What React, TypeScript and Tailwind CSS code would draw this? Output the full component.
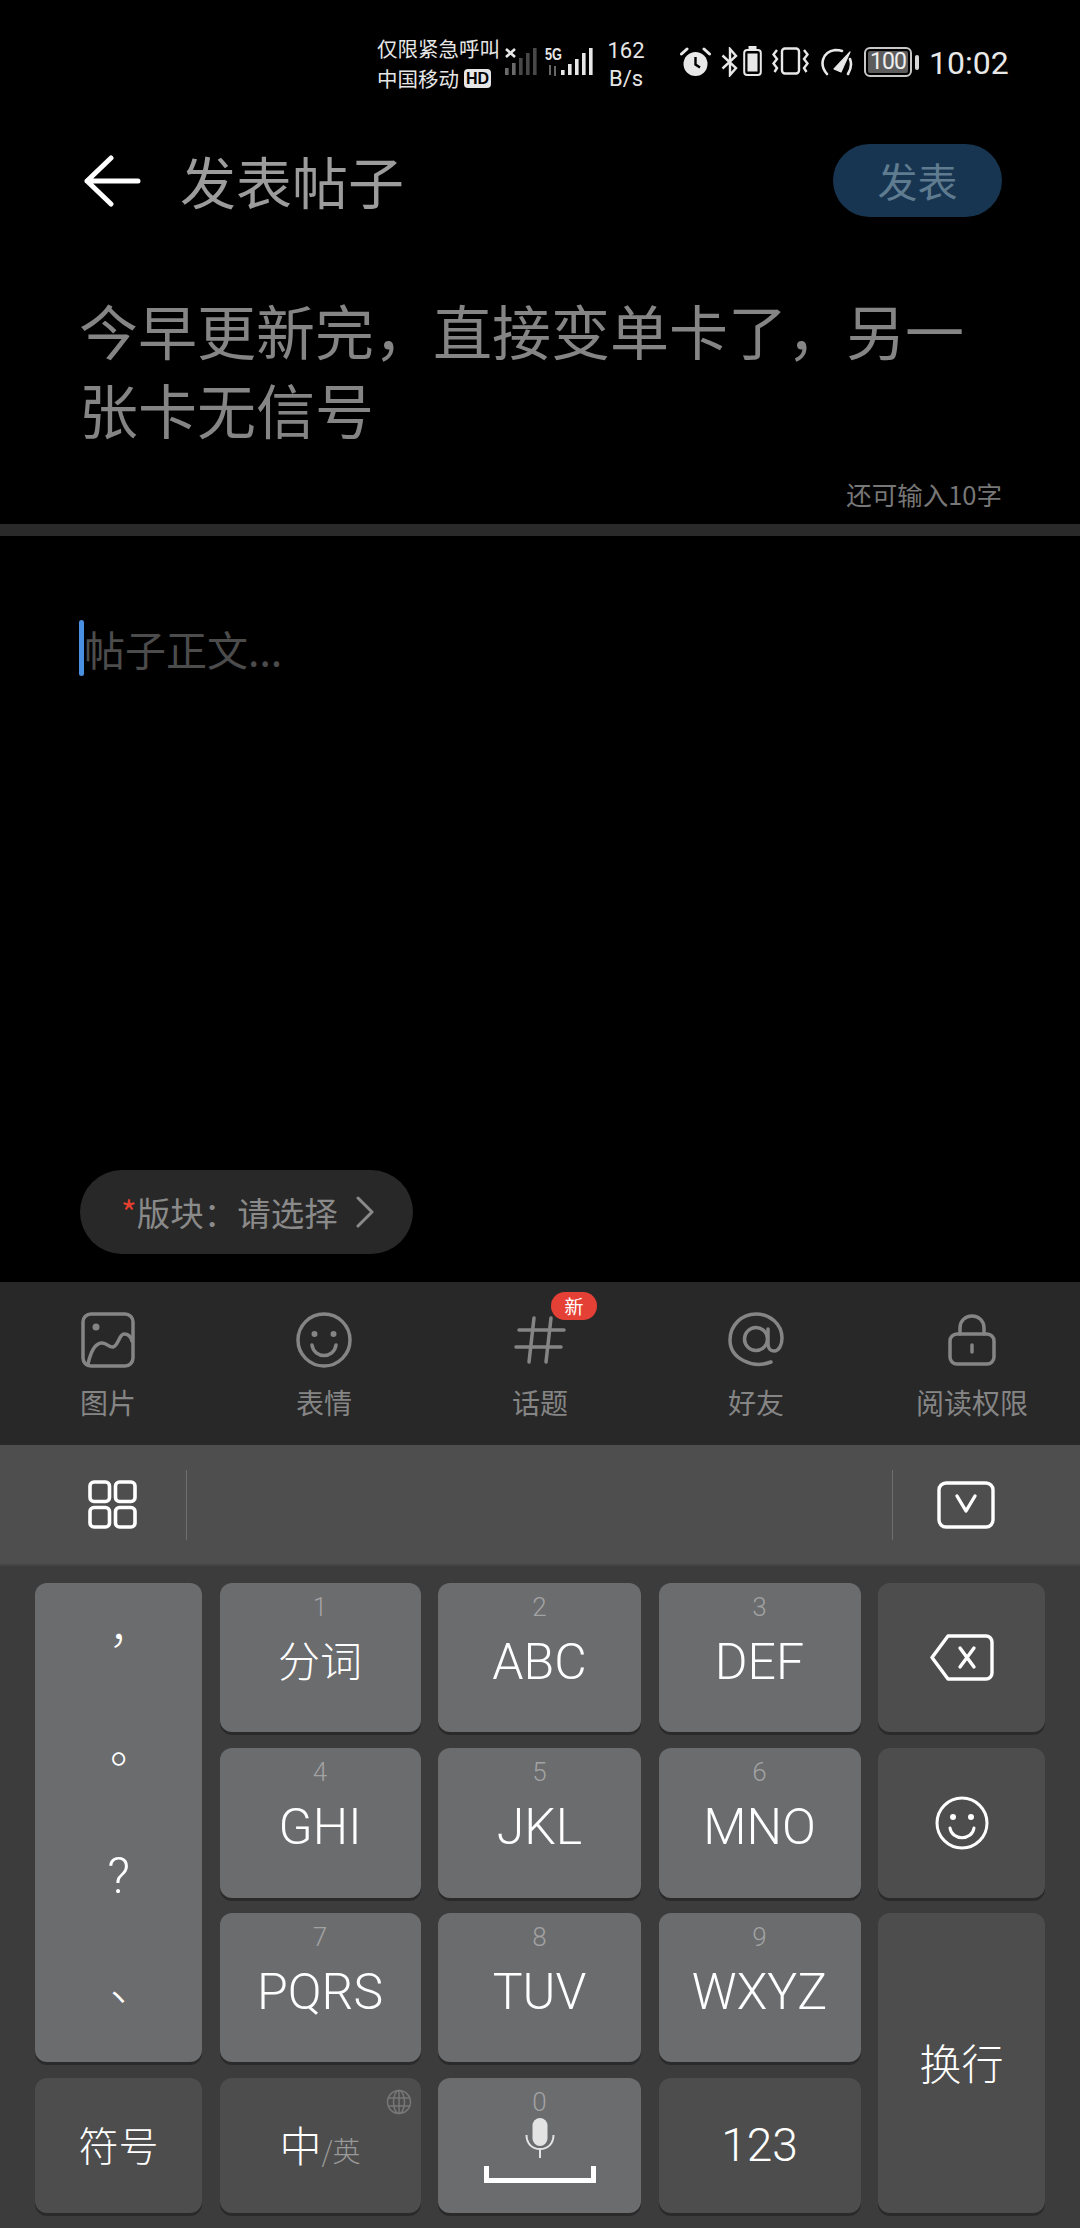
import React from "react";

const CJK = "font-['Noto_Sans_CJK_SC','Noto_Sans',sans-serif]";
const LAT = "font-['Liberation_Sans',sans-serif]";

function Signal({ dim, className }: { dim?: boolean; className?: string }) {
  const bars = dim
    ? [[0, 20, 7], [7, 15, 12], [14, 10, 17], [21, 5, 22], [28, 0, 27]]
    : [[0, 22, 5], [7, 16, 11], [14, 11, 16], [21, 5, 22], [28, 0, 27]];
  return (
    <svg width="32" height="27" viewBox="0 0 32 27" className={className}>
      {bars.map(([x, y, h], i) => (
        <rect key={i} x={x} y={y} width="3.6" height={h} fill={dim ? (i < 2 ? "#6a6a6a" : "#484848") : "#e8e8e8"} />
      ))}
    </svg>
  );
}

function StatusBar() {
  return (
    <div className="h-[144px] pt-[33px] pl-[377px] flex items-start text-[#e6e6e6]">
      <div className={`flex flex-col w-[124px] text-[20.500px] leading-[30px] ${CJK}`}>
        <div className="whitespace-nowrap">仅限紧急呼叫</div>
        <div className="flex items-center whitespace-nowrap">
          中国移动
          <span className={`ml-[5px] h-[19px] w-[27px] rounded-[4px] bg-[#e6e6e6] text-black text-[16px] leading-[19px] font-bold text-center ${LAT}`}>HD</span>
        </div>
      </div>
      <div className="relative w-[31px] h-[40px] ml-[4px] mt-[15px]">
        <Signal dim className="absolute left-0 top-0" />
        <svg width="12" height="10" viewBox="0 0 12 10" className="absolute left-0 top-0">
          <path d="M1 1l9 8M10 1l-9 8" stroke="#e8e8e8" strokeWidth="2.600" />
        </svg>
      </div>
      <div className="relative w-[50px] h-[40px] ml-[9px] mt-[15px]">
        <span className={`absolute left-0 -top-[2px] text-[17px] leading-[18px] font-bold scale-x-75 origin-left ${LAT}`}>5G</span>
        <svg width="12" height="11" viewBox="0 0 12 11" className="absolute left-[2px] top-[17px]">
          <path d="M3 0v10M8 1v10" stroke="#666" strokeWidth="2" />
        </svg>
        <Signal className="absolute left-[16px] top-0" />
      </div>
      <div className="w-[40px] ml-[11px] mt-[4px] text-[22px] leading-[28px] text-center font-['Roboto',sans-serif]">
        <div>162</div>
        <div>B/s</div>
      </div>
      <svg width="31" height="30" viewBox="0 0 31 30" className="ml-[34px] mt-[14px]" fill="none">
        <circle cx="15.500" cy="17" r="12" fill="#e8e8e8" />
        <path d="M15.500 10v7.500l4.500 3" stroke="#000" strokeWidth="2.400" />
        <path d="M1.500 7L7 2M29.500 7L24 2" stroke="#e8e8e8" strokeWidth="3" strokeLinecap="round" />
      </svg>
      <svg width="18" height="30" viewBox="0 0 18 30" className="ml-[10px] mt-[14px]" fill="none">
        <path d="M1.500 8.500L15 21l-6 7V2l6 7L1.500 21.500" stroke="#e8e8e8" strokeWidth="2.400" />
      </svg>
      <svg width="19" height="30" viewBox="0 0 19 30" className="ml-[4px] mt-[13px]" fill="none">
        <rect x="5.500" y="0" width="8" height="3" fill="#e8e8e8" />
        <rect x="1.200" y="4" width="16.600" height="25" rx="3" stroke="#e8e8e8" strokeWidth="2" />
        <rect x="4.500" y="7.500" width="10" height="18" fill="#e8e8e8" />
      </svg>
      <svg width="37" height="28" viewBox="0 0 37 28" className="ml-[10px] mt-[14px]" fill="none" stroke="#e8e8e8" strokeWidth="2.400">
        <rect x="10" y="1.500" width="17" height="25" rx="3" />
        <path d="M5 3L1.500 7.500 5 12l-3.500 4.500L5 21l-2.500 4M32 3l3.500 4.500L32 12l3.500 4.500L32 21l2.500 4" />
      </svg>
      <svg width="33" height="28" viewBox="0 0 33 28" className="ml-[11px] mt-[15px]" fill="none" stroke="#e8e8e8" strokeWidth="2.600" strokeLinecap="round">
        <path d="M7 26C-1 17 2 4 15 2c3 0 5 0 7 1" />
        <path d="M30 11c2 5 1 10-2 15" />
        <path d="M14 21L30 4l-9 20z" fill="#e8e8e8" strokeWidth="1.200" strokeLinejoin="round" />
      </svg>
      <div className="ml-[11px] mt-[14px] flex items-center">
        <div className="w-[48px] h-[30px] rounded-[6px] border-2 border-[#c8c8c8] p-[2px]">
          <div className="h-full bg-[#5c5c5c] rounded-[2px] text-[23px] leading-[22px] text-center text-[#efefef] font-['Roboto',sans-serif] tracking-[-1px]">100</div>
        </div>
        <div className="ml-[3px] w-[4px] h-[15px] bg-[#d8d8d8] rounded-[2px]" />
      </div>
      <div className="ml-[10px] mt-[11px] text-[32px] leading-[38px] text-[#e8e8e8] font-['Roboto',sans-serif]">10:02</div>
    </div>
  );
}

function ToolItem({ label, children, badge }: { label: string; children: React.ReactNode; badge?: boolean }) {
  return (
    <div className="relative flex-1 flex flex-col items-center">
      <div className="h-[60px] w-[60px] mt-[28px] flex items-center justify-center">{children}</div>
      <div className={`mt-[12px] text-[28px] leading-[40px] text-[#858585] whitespace-nowrap ${CJK}`}>{label}</div>
      {badge && (
        <div className={`absolute left-[119px] top-[10px] w-[46px] h-[28px] rounded-[14px] bg-[#e54035] text-white text-[19px] leading-[28px] text-center ${CJK}`}>新</div>
      )}
    </div>
  );
}

function Key({ children, dark, className = "" }: { children?: React.ReactNode; dark?: boolean; className?: string }) {
  return (
    <div className={`relative rounded-[12px] shadow-[0_3px_0_#2a2a2a] ${dark ? "bg-[#4d4d4d]" : "bg-[#6b6c6e]"} ${className}`}>
      {children}
    </div>
  );
}

function NumKey({ n, label, cjk }: { n: string; label: string; cjk?: boolean }) {
  return (
    <Key className="flex flex-col items-center">
      <div className="mt-[11px] h-[26px] text-[26px] leading-[26px] text-[#a2a2a3] font-['Roboto',sans-serif] font-light">{n}</div>
      <div className={`h-[50px] leading-[50px] text-white ${cjk ? `mt-[14px] text-[42px] font-light ${CJK}` : "mt-[17px] text-[50px] font-light font-['Roboto',sans-serif]"}`}>{label}</div>
    </Key>
  );
}

export default function App() {
  return (
    <div className="w-[1080px] h-[2228px] bg-black flex flex-col overflow-hidden">
      <StatusBar />

      <div className="h-[73px] pl-[84px] pr-[78px] flex items-center">
        <svg width="57" height="52" viewBox="0 0 57 52" fill="none" stroke="#fff" strokeWidth="5" strokeLinecap="round" strokeLinejoin="round">
          <path d="M27 3L3 26l24 23M3 26h51" />
        </svg>
        <div className={`ml-[39px] -mt-[2px] text-[56px] leading-[73px] text-[#9c9c9c] ${CJK}`}>发表帖子</div>
        <div className={`ml-auto w-[169px] h-[73px] rounded-[37px] bg-[#173550] text-[40px] leading-[73px] text-center text-[#5f7b90] ${CJK}`}>发表</div>
      </div>

      <div className={`pt-[73px] px-[79px] text-[59px] leading-[79px] text-[#858585] h-[231px] ${CJK}`}>
        今早更新完，直接变单卡了，另一
        <br />
        张卡无信号
      </div>
      <div className={`mt-[31px] mb-[3px] pr-[78px] text-right text-[25.500px] leading-[30px] text-[#777777] ${CJK}`}>还可输入10字</div>
      <div className="mt-[12px] h-[12px] bg-[#2a2a2a]" />

      <div className="flex-1 flex flex-col pl-[79px] pt-[84px]">
        <div className="flex items-center h-[56px]">
          <div className="w-[5px] h-[56px] rounded-[3px] bg-[#4a90e2]" />
          <div className={`-mt-[1px] text-[41px] leading-[56px] text-[#4c4c4c] ${CJK}`}>帖子正文...</div>
        </div>
        <div className={`mt-auto mb-[28px] ml-[1px] w-[333px] h-[84px] rounded-[42px] bg-[#282828] flex items-center pl-[41px] text-[33.500px] text-[#8a8a8a] ${CJK}`}>
          <span className="text-[#e5402f]">*</span>
          <span className="whitespace-nowrap">版块：请选择</span>
          <svg width="20" height="32" viewBox="0 0 20 32" fill="none" stroke="#8a8a8a" strokeWidth="3" strokeLinecap="round" strokeLinejoin="round" className="ml-[17px]">
            <path d="M3 2l14 14L3 30" />
          </svg>
        </div>
      </div>

      <div className="h-[163px] shrink-0 bg-[#282828] flex">
        <ToolItem label="图片">
          <svg width="54" height="56" viewBox="0 0 54 56" fill="none" stroke="#858585" strokeWidth="3.500" strokeLinejoin="round" strokeLinecap="round">
            <rect x="2" y="2" width="50" height="52" rx="8" />
            <circle cx="15" cy="15" r="3.500" fill="#858585" stroke="none" />
            <path d="M7 52c2-9 6-20 13-21 6-1 8 5 12 4 6-2 6-13 11-13 4 0 7 3 8 7" />
          </svg>
        </ToolItem>
        <ToolItem label="表情">
          <svg width="56" height="56" viewBox="0 0 56 56" fill="none" stroke="#858585" strokeWidth="3.500" strokeLinecap="round">
            <circle cx="28" cy="28" r="26" />
            <circle cx="18.500" cy="22" r="3" fill="#858585" stroke="none" />
            <circle cx="37.500" cy="22" r="3" fill="#858585" stroke="none" />
            <path d="M16 33c2 14 22 14 24 0" />
          </svg>
        </ToolItem>
        <ToolItem label="话题" badge>
          <svg width="52" height="48" viewBox="0 0 52 48" fill="none" stroke="#858585" strokeWidth="3.500" strokeLinecap="round">
            <path d="M5 14h45M2 31h45M20 2l-5 44M37 2l-5 44" />
          </svg>
        </ToolItem>
        <ToolItem label="好友">
          <svg width="56" height="56" viewBox="0 0 56 56" fill="none" stroke="#858585" strokeWidth="3.500" strokeLinecap="round">
            <path d="M43 50c-18 7-41-3-41-22C2 13 14 2 28 2s26 10 26 24c0 7-3 13-8 13-4 0-6-3-6-7V17" />
            <circle cx="28" cy="27" r="11.500" />
          </svg>
        </ToolItem>
        <ToolItem label="阅读权限">
          <svg width="48" height="52" viewBox="0 0 48 52" fill="none" stroke="#858585" strokeWidth="3.500" strokeLinecap="round">
            <rect x="2" y="20" width="44" height="30" rx="7" />
            <path d="M12 20v-6C12 7 17 2 24 2s12 5 12 12v6" />
            <path d="M24 31v7" />
          </svg>
        </ToolItem>
      </div>

      <div className="h-[121px] shrink-0 bg-[#4e4e4e] flex items-center pl-[88px] pr-[85px] border-b-2 border-[#444444]">
        <svg width="49" height="49" viewBox="0 0 49 49" fill="none" stroke="#fff" strokeWidth="3.600">
          <rect x="2" y="2" width="19.500" height="19.500" rx="4" />
          <rect x="27.500" y="2" width="19.500" height="19.500" rx="4" />
          <rect x="2" y="27.500" width="19.500" height="19.500" rx="4" />
          <rect x="27.500" y="27.500" width="19.500" height="19.500" rx="4" />
        </svg>
        <div className="ml-[49px] w-[1px] h-[70px] bg-[#6f6f6f]" />
        <div className="ml-auto w-[1px] h-[70px] bg-[#6f6f6f]" />
        <svg width="58" height="48" viewBox="0 0 58 48" fill="none" stroke="#fff" strokeWidth="3.400" strokeLinecap="round" strokeLinejoin="round" className="ml-[44px]">
          <rect x="2" y="2" width="54" height="44" rx="7" />
          <path d="M20 15l9 15 9-15" />
        </svg>
      </div>

      <div className="h-[662px] shrink-0 bg-[#3c3c3c] pt-[17px] px-[35px] grid grid-cols-[167px_201px_203px_202px_167px] grid-rows-[149px_150px_149px_135.500px] gap-y-[15.500px] gap-x-[17.500px]">
        <Key className="row-span-3 flex flex-col items-center pt-[25px] text-white font-['Noto_Sans_CJK_TC',sans-serif] font-light">
          <div className="h-[119px] shrink-0 text-[44px] leading-[60px]">，</div>
          <div className="h-[119px] shrink-0 text-[44px] leading-[60px]">。</div>
          <div className="h-[119px] shrink-0 text-[50px] leading-[60px] font-['Roboto',sans-serif]">?</div>
          <div className="h-[119px] shrink-0 text-[44px] leading-[60px]">、</div>
        </Key>
        <NumKey n="1" label="分词" cjk />
        <NumKey n="2" label="ABC" />
        <NumKey n="3" label="DEF" />
        <Key dark className="flex items-center justify-center">
          <svg width="64" height="47" viewBox="0 0 64 47" fill="none" stroke="#fff" strokeWidth="3.400" strokeLinejoin="round" strokeLinecap="round" className="-mt-[1px]">
            <path d="M18 2h38a6 6 0 0 1 6 6v31a6 6 0 0 1-6 6H18L2 23.500z" />
            <path d="M30 14l14 19M44 14L30 33" />
          </svg>
        </Key>
        <NumKey n="4" label="GHI" />
        <NumKey n="5" label="JKL" />
        <NumKey n="6" label="MNO" />
        <Key dark className="flex items-center justify-center">
          <svg width="54" height="54" viewBox="0 0 54 54" fill="none" stroke="#fff" strokeWidth="3" strokeLinecap="round">
            <circle cx="27" cy="27" r="25" />
            <circle cx="18" cy="21" r="3" fill="#fff" stroke="none" />
            <circle cx="36" cy="21" r="3" fill="#fff" stroke="none" />
            <path d="M15 32c2 13 22 13 24 0" />
          </svg>
        </Key>
        <NumKey n="7" label="PQRS" />
        <NumKey n="8" label="TUV" />
        <NumKey n="9" label="WXYZ" />
        <Key dark className={`row-span-2 flex items-center justify-center pb-[4px] text-[42px] font-light text-white ${CJK}`}>换行</Key>
        <Key dark className={`flex items-center justify-center pb-[2px] text-[40px] font-light text-white ${CJK}`}>符号</Key>
        <Key dark className={`flex items-baseline justify-center pt-[36px] font-light text-white ${CJK}`}>
          <span className="text-[42px] leading-[60px]">中</span>
          <span className="text-[28px] text-[#999999]">/英</span>
          <svg width="26" height="26" viewBox="0 0 26 26" fill="none" stroke="#777" strokeWidth="1.500" className="absolute right-[9px] top-[11px]">
            <circle cx="13" cy="13" r="11.500" />
            <ellipse cx="13" cy="13" rx="5.500" ry="11.500" />
            <path d="M13 1.500v23M2 9h22M2 17h22" />
          </svg>
        </Key>
        <Key className="flex flex-col items-center">
          <div className="mt-[11px] h-[26px] text-[26px] leading-[26px] text-[#a2a2a3] font-['Roboto',sans-serif] font-light">0</div>
          <svg width="30" height="40" viewBox="0 0 30 40" fill="none" className="mt-[3px]">
            <rect x="7.500" y="0" width="15" height="28" rx="7.500" fill="#e3e3e3" />
            <path d="M1.500 17c0 9 6 14 13.500 14s13.500-5 13.500-14M15 31v9" stroke="#e3e3e3" strokeWidth="2" />
          </svg>
          <svg width="112" height="17" viewBox="0 0 112 17" fill="none" stroke="#fff" strokeWidth="5" className="mt-[8px]">
            <path d="M2.500 0v14.500h107V0" />
          </svg>
        </Key>
        <Key dark className="flex items-center justify-center text-[46px] font-light text-white font-['Roboto',sans-serif]">123</Key>
      </div>
    </div>
  );
}
